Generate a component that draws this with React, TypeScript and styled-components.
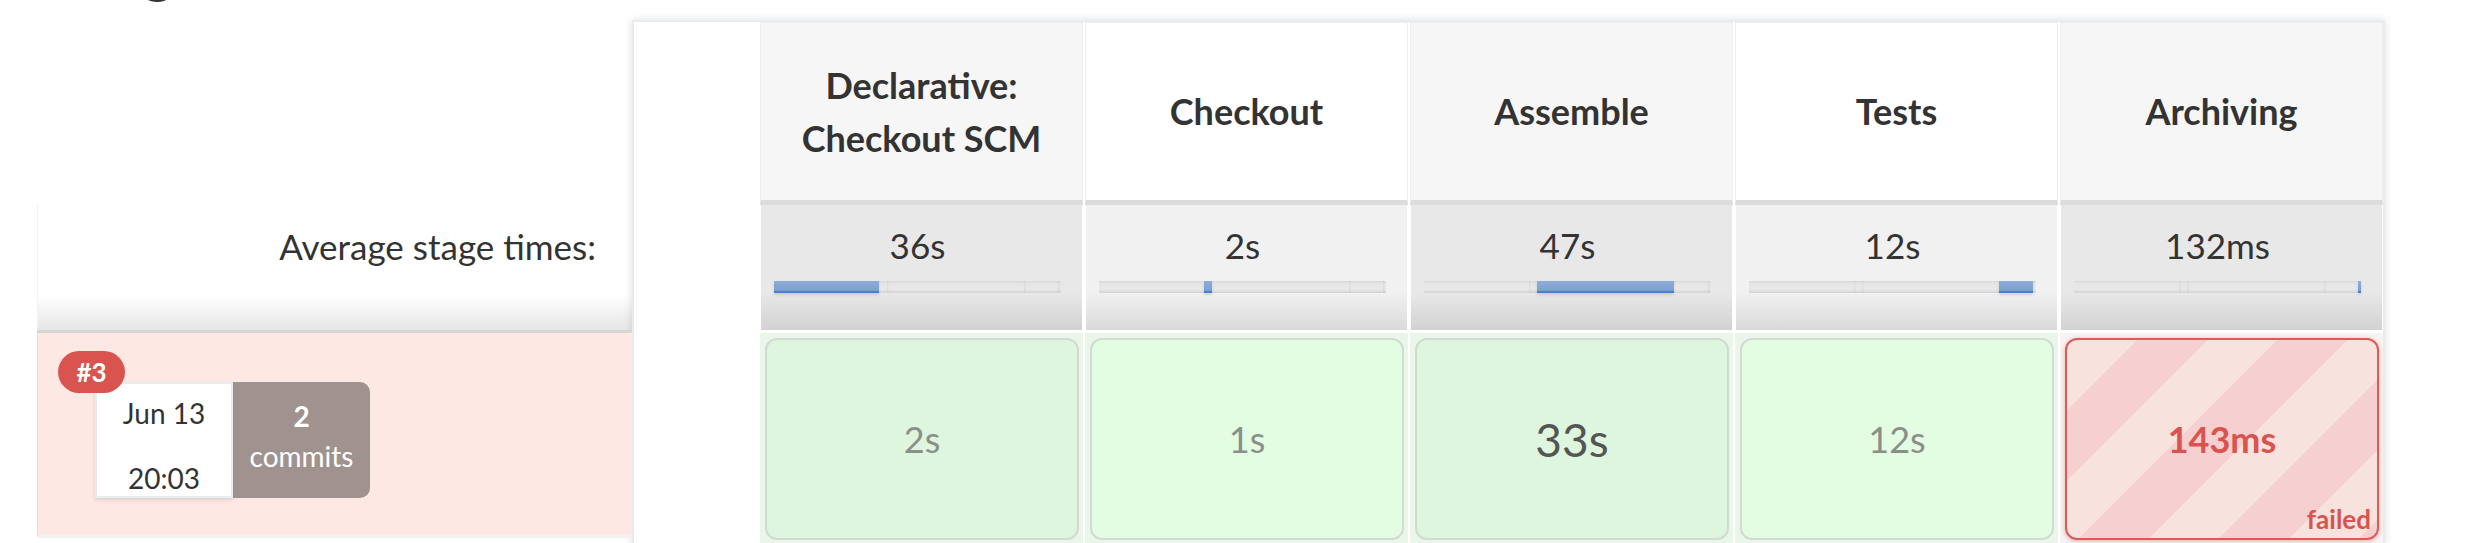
import React from "react";
import styled, { createGlobalStyle, css } from "styled-components";

const Global = createGlobalStyle`
  html, body { margin: 0; padding: 0; background: #fff; }
  body { font-family: Lato, "Open Sans", sans-serif; color: #333; overflow: hidden; }
  * { box-sizing: border-box; }
`;

type Stage = {
  name: string[];
  avg: string;
  dur: string;
  status: "success" | "failed";
  prominent?: boolean;
};

const stages: Stage[] = [
  { name: ["Declarative:", "Checkout SCM"], avg: "36s", dur: "2s", status: "success" },
  { name: ["Checkout"], avg: "2s", dur: "1s", status: "success" },
  { name: ["Assemble"], avg: "47s", dur: "33s", status: "success", prominent: true },
  { name: ["Tests"], avg: "12s", dur: "12s", status: "success" },
  { name: ["Archiving"], avg: "132ms", dur: "143ms", status: "failed" },
];

// widths in px of each stage within the 287px timeline bar
const timeline = [105, 8, 137, 34, 3];

const Page = styled.div`
  display: flex;
  flex-direction: column;
  width: 2477px;
  height: 543px;
  overflow: hidden;
`;

const Title = styled.h2`
  margin: -62px 0 0 58px;
  height: 60px;
  font-size: 60px;
  line-height: 60px;
  font-weight: 700;
  color: #333;
`;

const Board = styled.div`
  display: flex;
  align-items: flex-start;
  margin-top: 22px;
  padding-left: 37px;
`;

const BuildsColumn = styled.div`
  width: 595px;
  margin-top: 185px;
  display: flex;
  flex-direction: column;
`;

const AvgLabel = styled.div`
  height: 125px;
  padding: 16px 36px 0 0;
  text-align: right;
  font-size: 35px;
  line-height: 50px;
  color: #333;
  border-left: 1px solid #f3f3f3;
  background: linear-gradient(to bottom, #ffffff 0%, #ffffff 72%, #e6e6e6 100%);
`;

const BuildRow = styled.div`
  position: relative;
  height: 208px;
  display: flex;
  align-items: flex-start;
  padding: 49px 0 0 57px;
  background: #fde8e4;
  border-top: 3px solid #d6d6d6;
  border-left: 1px solid #e4dcdc;
  border-bottom: 3px solid #f2f2f2;
`;

const BuildBadge = styled.div`
  position: absolute;
  left: 20px;
  top: 18px;
  z-index: 2;
  width: 67px;
  height: 42px;
  border-radius: 21px;
  background: #d9534f;
  color: #fff;
  font-weight: 700;
  font-size: 26px;
  line-height: 42px;
  text-align: center;
`;

const DateBox = styled.div`
  width: 138px;
  height: 116px;
  padding-top: 11px;
  display: flex;
  flex-direction: column;
  align-items: center;
  gap: 29px;
  background: #fff;
  border: 2px solid #e6ecef;
  box-shadow: 0 2px 4px rgba(0, 0, 0, 0.12);
  font-size: 28px;
  line-height: 36px;
  color: #333;
`;

const CommitsBox = styled.div`
  width: 137px;
  height: 116px;
  padding-top: 14px;
  display: flex;
  flex-direction: column;
  align-items: center;
  background: #a0938f;
  border-radius: 0 10px 10px 0;
  color: #fff;
  font-size: 28px;
  line-height: 40px;
`;

const CommitCount = styled.span`
  font-weight: 700;
`;

const StageTable = styled.div`
  display: grid;
  grid-template-columns: 124px repeat(5, 323px);
  grid-template-rows: 183px 125px 214px;
  column-gap: 2px;
  border: 2px solid #e6ecef;
  background: #fff;
  box-shadow: 0 0 9px rgba(0, 0, 0, 0.13);
`;

const BlankCell = styled.div`
  grid-row: 1 / 4;
  background: #fff;
`;

const HeaderCell = styled.div<{ $shaded: boolean }>`
  display: flex;
  flex-direction: column;
  align-items: center;
  justify-content: center;
  background: ${(p) => (p.$shaded ? "#f6f6f6" : "#ffffff")};
  border: 1px solid #eeeeee;
  border-bottom: 5px solid #dcdcdc;
  font-size: 36px;
  font-weight: 700;
  line-height: 52.5px;
  color: #333;
  text-align: center;
`;

const AvgCell = styled.div<{ $shaded: boolean }>`
  display: flex;
  flex-direction: column;
  align-items: flex-start;
  padding: 15px 0 0 13px;
  margin: 0 1px;
  background: ${(p) =>
    p.$shaded
      ? "linear-gradient(to bottom, #e8e8e8 0%, #e8e8e8 70%, #d2d2d2 100%)"
      : "linear-gradient(to bottom, #f1f1f1 0%, #f1f1f1 70%, #dadada 100%)"};
`;

const AvgTime = styled.div`
  width: 287px;
  text-align: center;
  font-size: 35px;
  line-height: 50px;
  color: #333;
`;

const Bar = styled.div`
  display: flex;
  width: 287px;
  height: 12px;
  margin-top: 11px;
`;

const Segment = styled.div<{ $active: boolean }>`
  height: 12px;
  flex: none;
  ${(p) =>
    p.$active
      ? css`
          background: linear-gradient(to bottom, #8eadd8 0%, #7c9fd2 80%, #4a7ed6 80%, #4a7ed6 100%);
          box-shadow: 0 2px 3px rgba(0, 0, 0, 0.12);
        `
      : css`
          background: linear-gradient(to bottom, #d9d9d9 0%, #e6e6e6 25%, #e8e8e8 70%, #d2d2d2 100%);
          box-shadow: inset 2px 0 2px -1px rgba(0, 0, 0, 0.06);
          &:first-child { box-shadow: none; }
        `}
`;

const RowCell = styled.div<{ $status: "success" | "failed" }>`
  margin-top: 3px;
  padding: 5px 4px 3px 5px;
  background: ${(p) => (p.$status === "failed" ? "#f6f3f3" : "#eaf6ea")};
`;

const StageBox = styled.div<{ $status: "success" | "failed"; $shaded: boolean }>`
  position: relative;
  height: 202px;
  display: flex;
  align-items: center;
  justify-content: center;
  border-radius: 12px;
  ${(p) =>
    p.$status === "failed"
      ? css`
          border: 2px solid #dc5b56;
          background: repeating-linear-gradient(
            135deg,
            #f7e2de 0px,
            #f7e2de 49.5px,
            #f6d0d0 49.5px,
            #f6d0d0 99px
          );
          box-shadow: 0 1px 4px rgba(217, 83, 79, 0.45);
        `
      : css`
          border: 2px solid #d3d9d3;
          background: ${p.$shaded ? "#ddf6dd" : "#e3fde3"};
        `}
`;

const Duration = styled.span<{ $status: "success" | "failed"; $prominent: boolean }>`
  font-size: ${(p) => (p.$prominent ? "46px" : "36px")};
  font-weight: ${(p) => (p.$status === "failed" ? 700 : 400)};
  color: ${(p) => (p.$status === "failed" ? "#d9534f" : p.$prominent ? "#555" : "#8a8f8a")};
`;

const FailedTag = styled.span`
  position: absolute;
  right: 6px;
  bottom: 6px;
  font-size: 26px;
  line-height: 25px;
  font-weight: 700;
  color: #d9534f;
`;

export default function App() {
  return (
    <>
      <Global />
      <Page>
        <Title>Stage View</Title>
        <Board>
          <BuildsColumn>
            <AvgLabel>Average stage times:</AvgLabel>
            <BuildRow>
              <BuildBadge>#3</BuildBadge>
              <DateBox>
                <span>Jun 13</span>
                <span>20:03</span>
              </DateBox>
              <CommitsBox>
                <CommitCount>2</CommitCount>
                <span>commits</span>
              </CommitsBox>
            </BuildRow>
          </BuildsColumn>
          <StageTable>
            <BlankCell />
            {stages.map((s, i) => (
              <HeaderCell key={"h" + i} $shaded={i % 2 === 0}>
                {s.name.map((line) => (
                  <span key={line}>{line}</span>
                ))}
              </HeaderCell>
            ))}
            {stages.map((s, i) => (
              <AvgCell key={"a" + i} $shaded={i % 2 === 0}>
                <AvgTime>{s.avg}</AvgTime>
                <Bar>
                  {timeline.map((w, j) => (
                    <Segment key={j} $active={j === i} style={{ width: w }} />
                  ))}
                </Bar>
              </AvgCell>
            ))}
            {stages.map((s, i) => (
              <RowCell key={"r" + i} $status={s.status}>
                <StageBox $status={s.status} $shaded={i % 2 === 0}>
                  <Duration $status={s.status} $prominent={!!s.prominent}>
                    {s.dur}
                  </Duration>
                  {s.status === "failed" && <FailedTag>failed</FailedTag>}
                </StageBox>
              </RowCell>
            ))}
          </StageTable>
        </Board>
      </Page>
    </>
  );
}
